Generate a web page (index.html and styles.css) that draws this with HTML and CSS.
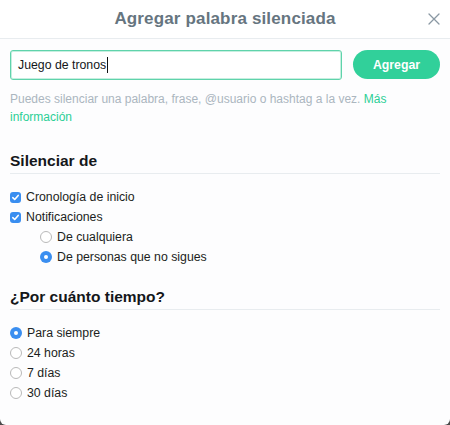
FILE: index.html
```html
<!DOCTYPE html>
<html lang="es">
<head>
<meta charset="utf-8">
<title>Agregar palabra silenciada</title>
<link rel="stylesheet" href="styles.css">
</head>
<body>
<div class="modal">
  <header class="modal-header">
    <h1 class="title">Agregar palabra silenciada</h1>
    <button class="close" aria-label="Cerrar">
      <svg width="12" height="12" viewBox="0 0 12 12"><path d="M1 1L11 11M11 1L1 11" stroke="#8a98a3" stroke-width="1.3" fill="none" stroke-linecap="round"/></svg>
    </button>
  </header>
  <div class="content">
    <div class="entry">
      <div class="field"><span class="field-text">Juego de tronos</span><span class="caret"></span></div>
      <button class="add">Agregar</button>
    </div>
    <p class="help">Puedes silenciar una palabra, frase, @usuario o hashtag a la vez. <a class="link" href="#">Más</a> <a class="link" href="#">información</a></p>

    <h2 class="section">Silenciar de</h2>
    <ul class="options">
      <li class="opt"><span class="check"><svg width="9" height="9" viewBox="0 0 9 9"><path d="M1.8 4.7L3.7 6.5L7.2 2.4" stroke="#fff" stroke-width="1.6" fill="none" stroke-linecap="round" stroke-linejoin="round"/></svg></span>Cronología de inicio</li>
      <li class="opt"><span class="check"><svg width="9" height="9" viewBox="0 0 9 9"><path d="M1.8 4.7L3.7 6.5L7.2 2.4" stroke="#fff" stroke-width="1.6" fill="none" stroke-linecap="round" stroke-linejoin="round"/></svg></span>Notificaciones</li>
      <li class="opt sub"><span class="radio"></span>De cualquiera</li>
      <li class="opt sub"><span class="radio on"></span>De personas que no sigues</li>
    </ul>

    <h2 class="section second">¿Por cuánto tiempo?</h2>
    <ul class="options">
      <li class="opt"><span class="radio on"></span>Para siempre</li>
      <li class="opt"><span class="radio"></span>24 horas</li>
      <li class="opt"><span class="radio"></span>7 días</li>
      <li class="opt"><span class="radio"></span>30 días</li>
    </ul>
  </div>
</div>
</body>
</html>
```
FILE: styles.css
```css
* { box-sizing: border-box; }
html, body { margin: 0; padding: 0; }
body {
  background: #4a4a4a;
  font-family: "Liberation Sans", Arial, sans-serif;
  width: 450px;
  height: 425px;
  overflow: hidden;
}
.modal {
  width: 450px;
  height: 425px;
  background: #fdfdfe;
  border-radius: 0 0 6px 6px;
  overflow: hidden;
}
.modal-header {
  height: 39px;
  background: #fff;
  border-bottom: 1px solid #e8ecef;
  display: flex;
  align-items: center;
  justify-content: center;
  position: relative;
}
.title {
  margin: 0;
  font-size: 17px;
  font-weight: bold;
  color: #66757f;
  letter-spacing: 0.15px;
}
.close {
  position: absolute;
  right: 10px;
  top: 13px;
  border: 0;
  background: none;
  padding: 0;
  width: 12px;
  height: 12px;
  display: flex;
}
.content {
  padding: 11px 10px 0 10px;
}
.entry {
  display: flex;
  gap: 11px;
  align-items: flex-start;
}
.field {
  flex: 1;
  height: 30px;
  border: 1px solid #5fd3ab;
  box-shadow: inset 0 0 0 1px #c6efe0;
  border-radius: 3px;
  background: #fff;
  display: flex;
  align-items: center;
  padding-left: 7px;
  font-size: 12.3px;
  color: #14171a;
}
.caret {
  width: 1px;
  height: 16px;
  background: #111;
  margin-left: 1px;
}
.add {
  width: 87px;
  height: 29px;
  border: 0;
  border-radius: 15px;
  background: #31d09a;
  color: #fff;
  font-family: inherit;
  font-size: 12.3px;
  font-weight: bold;
  padding: 0;
}
.help {
  margin: 11px 0 0;
  font-size: 12px;
  line-height: 17.5px;
  color: #abb6bf;
}
.link {
  color: #2ccf96;
  text-decoration: none;
}
.section {
  margin: 25px 0 0;
  font-size: 15.5px;
  line-height: 20px;
  font-weight: bold;
  color: #14171a;
  padding-bottom: 2px;
  border-bottom: 1px solid #e8ecef;
}
.section.second {
  margin-top: 20px;
}
.options {
  list-style: none;
  margin: 13px 0 0;
  padding: 0;
}
.opt {
  display: flex;
  align-items: center;
  height: 20px;
  font-size: 12.3px;
  color: #1c1f22;
  gap: 5px;
}
.opt.sub {
  padding-left: 30px;
}
.check {
  width: 11px;
  height: 11px;
  border-radius: 3px;
  background: #3a8ef0;
  display: flex;
  align-items: center;
  justify-content: center;
  margin-top: 1px;
}
.radio {
  width: 12px;
  height: 12px;
  border-radius: 50%;
  border: 1px solid #b9b9b9;
  background: #fff;
  display: flex;
  align-items: center;
  justify-content: center;
}
.radio.on {
  border: 0;
  background: #3a8ef0;
}
.radio.on::after {
  content: "";
  width: 4px;
  height: 4px;
  border-radius: 50%;
  background: #fff;
}
```
